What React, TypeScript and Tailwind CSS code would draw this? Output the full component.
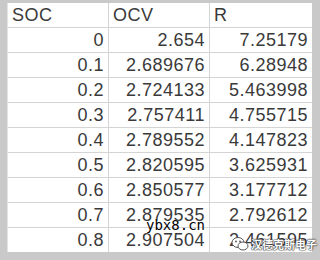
const rows = [
  ["0", "2.654", "7.25179"],
  ["0.1", "2.689676", "6.28948"],
  ["0.2", "2.724133", "5.463998"],
  ["0.3", "2.757411", "4.755715"],
  ["0.4", "2.789552", "4.147823"],
  ["0.5", "2.820595", "3.625931"],
  ["0.6", "2.850577", "3.177712"],
  ["0.7", "2.879535", "2.792612"],
  ["0.8", "2.907504", "2.461595"],
];

function Cell({ children, right, last }: { children: string; right?: boolean; last?: boolean }) {
  return (
    <div
      className={`flex h-full items-center px-[4px] ${right ? "justify-end" : "justify-start"} ${
        last ? "" : "border-r border-[#d4d4d4]"
      }`}
    >
      <span className="tracking-[0.5px]">{children}</span>
    </div>
  );
}

export default function App() {
  return (
    <div
      className="relative h-[260px] w-[320px] overflow-hidden bg-[#c9c9c9] pt-[3px] pr-[8px] pb-[8px] pl-[7px] text-[18px] text-[#3a3a3a]"
      style={{ fontFamily: '"Liberation Sans", Arial, sans-serif' }}
    >
      <div className="grid h-full grid-cols-[101px_101px_1fr] grid-rows-[25px_repeat(9,25px)] border-l border-[#e4e4e4] bg-white">
        {["SOC", "OCV", "R"].map((h, i) => (
          <div key={h} className="border-b border-[#d4d4d4]">
            <Cell last={i === 2}>{h}</Cell>
          </div>
        ))}
        {rows.map((r, ri) =>
          r.map((v, i) => (
            <div key={ri + "-" + i} className={ri === rows.length - 1 ? "" : "border-b border-[#d4d4d4]"}>
              <Cell right last={i === 2}>
                {v}
              </Cell>
            </div>
          ))
        )}
      </div>

      {/* watermarks */}
      <span
        className="absolute top-[218px] left-[146px] text-[14px] leading-none text-black [text-shadow:0_0_2px_#fff]"
        style={{ fontFamily: '"DejaVu Sans Mono", monospace' }}
      >
        ybx8.cn
      </span>
      <div className="absolute top-[236px] left-[231px] flex items-center gap-[2px]">
        <svg width="18" height="16" viewBox="0 0 18 16">
          <ellipse cx="7" cy="6.5" rx="6" ry="5" fill="#fff" stroke="#555" strokeWidth="1" />
          <ellipse cx="12" cy="10" rx="5" ry="4" fill="#fff" stroke="#555" strokeWidth="1" />
          <circle cx="5" cy="5.5" r="0.9" fill="#555" />
          <circle cx="9" cy="5.5" r="0.9" fill="#555" />
        </svg>
        <span
          className="text-[11px] leading-none font-bold text-white [text-shadow:0_0_1px_#333,0_0_1px_#333,0_0_2px_#333]"
          style={{ fontFamily: '"Noto Sans CJK SC", sans-serif' }}
        >
          汉德克斯电子
        </span>
      </div>
    </div>
  );
}
